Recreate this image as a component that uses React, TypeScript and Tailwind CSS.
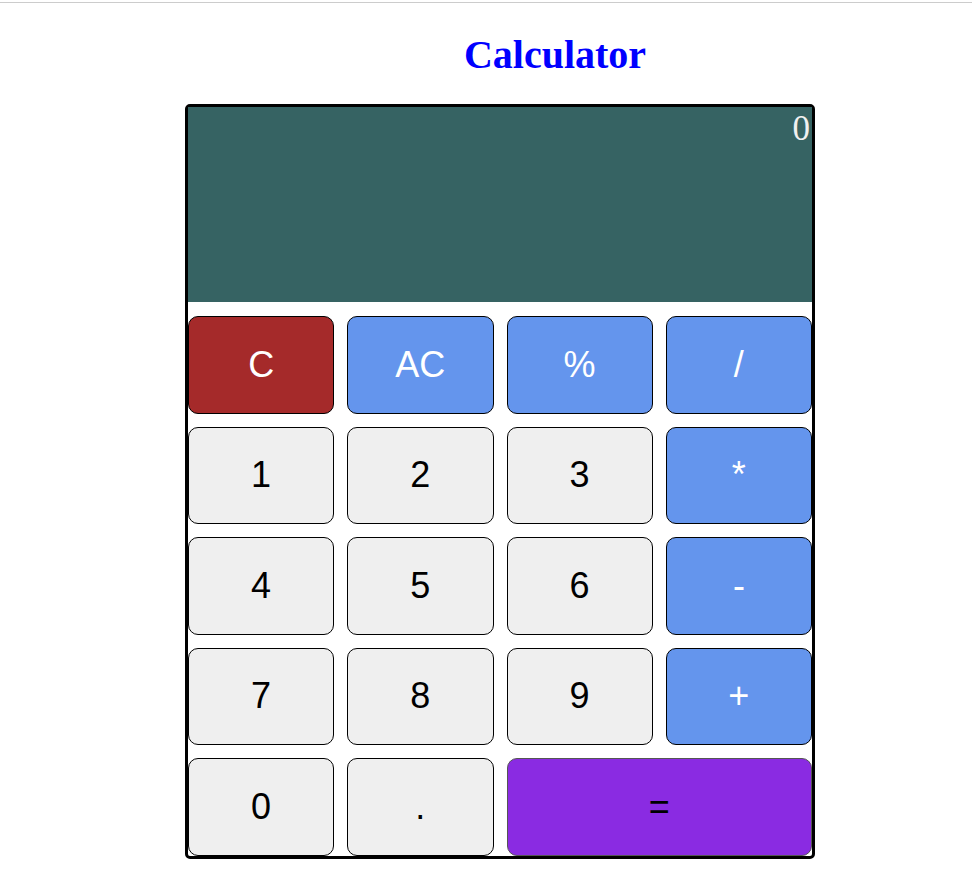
import React from "react";

type Key = { label: string; kind: "red" | "blue" | "gray" | "purple"; wide?: boolean };

const keys: Key[] = [
  { label: "C", kind: "red" },
  { label: "AC", kind: "blue" },
  { label: "%", kind: "blue" },
  { label: "/", kind: "blue" },
  { label: "1", kind: "gray" },
  { label: "2", kind: "gray" },
  { label: "3", kind: "gray" },
  { label: "*", kind: "blue" },
  { label: "4", kind: "gray" },
  { label: "5", kind: "gray" },
  { label: "6", kind: "gray" },
  { label: "-", kind: "blue" },
  { label: "7", kind: "gray" },
  { label: "8", kind: "gray" },
  { label: "9", kind: "gray" },
  { label: "+", kind: "blue" },
  { label: "0", kind: "gray" },
  { label: ".", kind: "gray" },
  { label: "=", kind: "purple", wide: true },
];

const kindClass = {
  red: "bg-[#a52a2a] text-white border-black",
  blue: "bg-[#6495ed] text-white border-black",
  gray: "bg-[#efefef] text-black border-black",
  purple: "bg-[#8a2be2] text-black border-[#555555] col-span-2",
};

export default function App() {
  return (
    <div className="min-h-screen bg-white">
      <div className="h-px mt-[2px] bg-[#cccccc]" />
      <div className="w-[740px] ml-[185px] mt-[29px] text-center">
        <h1 className="text-[40px] font-bold text-[#0000ff] leading-[46px] font-['Liberation_Serif',serif]">
          Calculator
        </h1>
      </div>
      <div className="w-[630px] ml-[185px] mt-[26px] border-[3px] border-black rounded-[5px] flex flex-col gap-[14px] bg-white">
        <div className="h-[195px] bg-[#366363] text-right pr-[2px] pt-[2px] text-[35px] text-[#f0f0f0] leading-[40px] font-['Liberation_Serif',serif]">
          0
        </div>
        <div className="grid grid-cols-4 gap-x-[13px] gap-y-[13px]">
          {keys.map((k) => (
            <button
              key={k.label}
              className={`h-[97.5px] rounded-[10px] border text-[36px] font-['Liberation_Sans',Arial,sans-serif] flex items-center justify-center ${kindClass[k.kind]}`}
            >
              {k.label}
            </button>
          ))}
        </div>
      </div>
    </div>
  );
}
